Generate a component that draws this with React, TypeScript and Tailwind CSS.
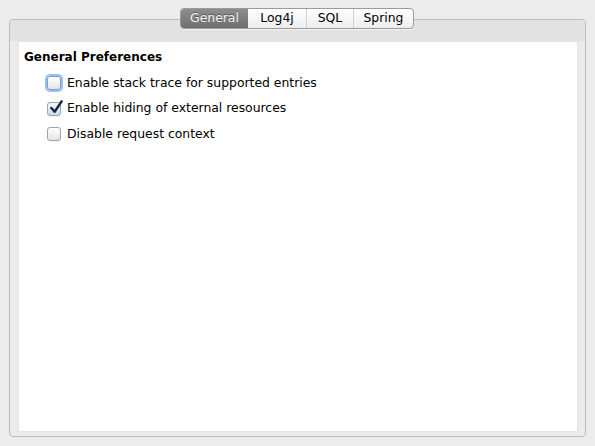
import { useState } from "react";

const tabs = ["General", "Log4j", "SQL", "Spring"];

const options = [
  { label: "Enable stack trace for supported entries", checked: false, focused: true },
  { label: "Enable hiding of external resources", checked: true, focused: false },
  { label: "Disable request context", checked: false, focused: false },
];

function CheckBox({ checked, focused }: { checked: boolean; focused: boolean }) {
  return (
    <span
      className={
        "relative flex h-[14px] w-[14px] shrink-0 items-center justify-center rounded-[3px] border bg-gradient-to-b " +
        (checked ? "from-[#f4f8fd] to-[#c9dbef] " : "from-[#ffffff] to-[#e4e4e4] ") +
        (focused
          ? "border-[#6f9fd6] shadow-[0_0_0_2px_#9cc0e8]"
          : "border-[#a3a3a3] shadow-[0_1px_0_rgba(0,0,0,0.06)]")
      }
    >
      {checked && (
        <svg
          viewBox="0 0 16 16"
          className="absolute left-[1px] top-[-3px] h-[15px] w-[15px]"
        >
          <path
            d="M2.5 8.5 L6 12.5 L13.5 1.5"
            fill="none"
            stroke="#1b2540"
            strokeWidth="2.6"
            strokeLinecap="round"
            strokeLinejoin="round"
          />
        </svg>
      )}
    </span>
  );
}

export default function App() {
  const [active, setActive] = useState(0);
  const [values, setValues] = useState(options.map((o) => o.checked));

  return (
    <div className="relative h-[446px] w-[595px] overflow-hidden bg-[#ececec] font-['DejaVu_Sans',sans-serif] text-black">
      <div className="px-[9px] pt-[19px]">
        <div className="flex h-[418px] flex-col rounded-[4px] border border-[#bcbcbc] bg-[#ebebeb]">
          <div className="h-[21px] shrink-0 rounded-t-[3px] bg-[#e2e2e2]" />
          <div className="flex flex-1 flex-col pb-[4px] pl-[8px] pr-[7px]">
            <div className="flex-1 border border-[#e4e4e4] bg-white px-[5px] pt-[5px]">
              <div className="text-[12px] font-bold leading-[20px]">General Preferences</div>
              <div className="mt-[7px] flex flex-col gap-[7.5px] pl-[23px]">
                {options.map((o, i) => (
                  <label
                    key={o.label}
                    className="flex h-[18px] cursor-default items-center gap-[6px] text-[12.4px]"
                    onClick={() => setValues(values.map((v, j) => (j === i ? !v : v)))}
                  >
                    <CheckBox checked={values[i]} focused={o.focused} />
                    <span>{o.label}</span>
                  </label>
                ))}
              </div>
            </div>
          </div>
        </div>
      </div>

      <div className="absolute left-[180px] top-[8px] flex h-[21px] overflow-hidden rounded-[4px] border border-[#9a9a9a] bg-gradient-to-b from-[#ffffff] to-[#ededed] shadow-[0_1px_0_rgba(255,255,255,0.6)]">
        {tabs.map((t, i) => (
          <button
            key={t}
            onClick={() => setActive(i)}
            className={
              "flex items-center justify-center text-[12.4px] leading-none " +
              (i === 0 ? "w-[67px] " : i === 1 ? "w-[58px] " : i === 2 ? "w-[47px] " : "w-[60px] ") +
              (i === active
                ? "bg-gradient-to-b from-[#8e8e8e] to-[#6f6f6f] text-[#f4f4f4] [text-shadow:0_-1px_0_rgba(0,0,0,0.35)]"
                : "text-black") +
              (i > 0 && i !== active && i - 1 !== active ? " border-l border-[#d0d0d0]" : "")
            }
          >
            {t}
          </button>
        ))}
      </div>
    </div>
  );
}
